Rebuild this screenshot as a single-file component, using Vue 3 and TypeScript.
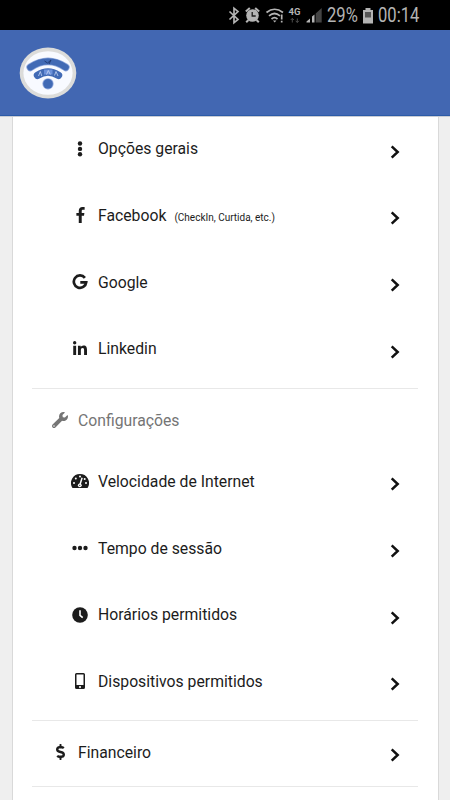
<script setup lang="ts">
interface MenuItem {
  label: string
  icon: string
  note?: string
}

const social: MenuItem[] = [
  { label: 'Opções gerais', icon: 'dots-v' },
  { label: 'Facebook', icon: 'facebook', note: '(CheckIn, Curtida, etc.)' },
  { label: 'Google', icon: 'google' },
  { label: 'Linkedin', icon: 'linkedin' },
]

const settings: MenuItem[] = [
  { label: 'Velocidade de Internet', icon: 'gauge' },
  { label: 'Tempo de sessão', icon: 'dots-h' },
  { label: 'Horários permitidos', icon: 'clock' },
  { label: 'Dispositivos permitidos', icon: 'phone' },
]

const groups: MenuItem[][] = [social, settings]
</script>

<template>
  <div class="screen">
    <div class="status">
      <svg class="status-icons" width="100" height="30" viewBox="226 0 100 30">
        <path d="M229.500 11.500l8.500 8-4 3.300V8.200l4 3.300-8.500 8" fill="none" stroke="#b4b4b4" stroke-width="1.700" />
        <circle cx="252.500" cy="15.500" r="6.300" fill="#b4b4b4" />
        <path d="M245.800 11.500l4-3.500M259.200 11.500l-4-3.500M248.500 20l-2.300 2.300M256.500 20l2.300 2.300" stroke="#b4b4b4" stroke-width="2" />
        <path d="M252.200 12v4h3.500" fill="none" stroke="#1c1c1c" stroke-width="1.300" />
        <g fill="none" stroke="#b4b4b4" stroke-width="1.700">
          <path d="M266.500 12.500q8-6.500 16.500 0" />
          <path d="M269 15.800q5.500-4.600 11 0" />
          <path d="M271.500 19q3-2.600 6 0" />
        </g>
        <path d="M273 20.500h3.400l-1.700 2z" fill="#b4b4b4" />
        <path d="M281.700 14.500v5M281.700 20.700v1.800" stroke="#b4b4b4" stroke-width="1.700" />
        <text x="288.500" y="15.300" class="net">4G</text>
        <path d="M292.300 22.500v-4M290.700 20l1.600-1.700 1.600 1.700M297.300 18.500v4M295.700 20.800l1.600 1.700 1.600-1.700" fill="none" stroke="#4c4c4c" stroke-width="1" />
        <path d="M306.500 22.500v-1l3.500-3v4zM312 22.500v-6l2.500-2v8z" fill="#b4b4b4" />
        <path d="M315.700 22.500V13.500l6-5.500v14.500z" fill="#444" />
      </svg>
      <span class="pct">29%</span>
      <svg class="battery" width="12" height="16" viewBox="0 0 12 16">
        <path d="M3.500 0h5v2H11v13.500H1V2h2.500z" fill="#b4b4b4" />
        <path d="M3 4h6v5.500H3z" fill="#555" />
      </svg>
      <span class="time">00:14</span>
    </div>

    <header class="bar">
      <svg width="58" height="52" viewBox="0 0 58 52">
        <ellipse cx="29" cy="26" rx="28.300" ry="25.400" fill="#dcdcda" />
        <ellipse cx="29" cy="26" rx="24.600" ry="21.800" fill="#f8faff" />
        <path d="M11.300 20.300Q29 8.500 46.700 20.300" fill="none" stroke="#8fa8dc" stroke-width="7.800" stroke-linecap="round" />
        <path d="M11.300 20.300Q29 8.500 46.700 20.300" fill="none" stroke="#416ab5" stroke-width="6.200" stroke-linecap="round" />
        <path d="M18.500 28.300Q29 21.500 39.500 28.300" fill="none" stroke="#416ab5" stroke-width="7.400" stroke-linecap="round" />
        <path d="M25 22.500h8.500v5H25z" fill="#6c91da" />
        <path d="M27.500 27.500l1.800-4 2 4M19.500 29l1.800-4.500 1.500 4.500M35.500 28.500l1.500-4 2 4.500" fill="none" stroke="#c5d4f4" stroke-width=".8" />
        <path d="M25.500 14l3 2 3.500-3-2 4" fill="none" stroke="#203c76" stroke-width="1" />
        <circle cx="29" cy="36.800" r="5.600" fill="#8fa8dc" />
        <circle cx="29" cy="36.800" r="4.800" fill="#416ab5" />
      </svg>
    </header>

    <main class="page">
      <section class="card">
        <template v-for="(items, g) in groups" :key="g">
          <h2 v-if="g === 1" class="heading">
            <svg width="16" height="16" viewBox="0 0 512 512" fill="currentColor">
              <path d="M507.730 109.100c-2.240-9.030-13.540-12.090-20.120-5.510l-74.360 74.360-67.880-11.310-11.310-67.880 74.360-74.360c6.620-6.620 3.430-17.900-5.660-20.160-47.380-11.740-99.550.91-136.580 37.930-39.640 39.640-50.550 97.100-34.050 147.200L18.740 402.760c-24.990 24.990-24.990 65.510 0 90.500 24.990 24.990 65.510 24.990 90.500 0l213.210-213.210c50.120 16.710 107.470 5.680 147.370-34.220 37.070-37.070 49.700-89.320 37.910-136.730zM64 472c-13.250 0-24-10.750-24-24 0-13.260 10.750-24 24-24s24 10.740 24 24c0 13.250-10.750 24-24 24z" />
            </svg>
            <span>Configurações</span>
          </h2>
          <ul class="group">
            <li v-for="item in items" :key="item.label" class="row">
              <span class="icon">
                <svg v-if="item.icon === 'dots-v'" width="18" height="16" viewBox="0 0 18 16" fill="currentColor">
                  <circle cx="9" cy="2.500" r="2.200" /><circle cx="9" cy="7.900" r="2.200" /><circle cx="9" cy="13.300" r="2.200" />
                </svg>
                <svg v-else-if="item.icon === 'facebook'" width="9" height="16" viewBox="0 0 264 512" fill="currentColor">
                  <path d="M215.800 85H264V3.600C255.700 2.500 227.100 0 193.800 0 124.300 0 76.700 42.400 76.700 120.300V192H0v91h76.700v229h94V283h73.600l11.700-91h-85.300v-62.700c0-26.300 7.300-44.300 45.100-44.300z" />
                </svg>
                <svg v-else-if="item.icon === 'google'" width="16" height="16" viewBox="0 0 16 16">
                  <path d="M12.900 3.800A6.200 6.200 0 1 0 14.200 8.300H8.300" fill="none" stroke="currentColor" stroke-width="2.700" />
                </svg>
                <svg v-else-if="item.icon === 'linkedin'" width="14" height="16" viewBox="0 0 448 512" fill="currentColor">
                  <path d="M100.280 448H7.400V148.900h92.880zM53.790 108.100C24.090 108.100 0 83.500 0 53.800a53.790 53.790 0 0 1 107.580 0c0 29.700-24.100 54.300-53.790 54.300zM447.900 448h-92.680V302.400c0-34.700-.7-79.200-48.290-79.200-48.290 0-55.690 37.700-55.690 76.700V448h-92.780V148.900h89.080v40.800h1.300c12.400-23.500 42.690-48.300 87.880-48.300 94 0 111.280 61.900 111.280 142.300V448z" />
                </svg>
                <svg v-else-if="item.icon === 'gauge'" width="18" height="14" viewBox="0 0 18 14">
                  <path d="M9 0a9 9 0 0 0-7.800 13.500q.3.500.8.500h14q.5 0 .8-.5A9 9 0 0 0 9 0z" fill="currentColor" />
                  <g fill="#fff">
                    <circle cx="3" cy="9" r="1" /><circle cx="4.800" cy="4.500" r="1" /><circle cx="9" cy="2.500" r="1" />
                    <circle cx="15" cy="9" r="1" /><circle cx="13.700" cy="5" r="1" /><circle cx="8.800" cy="11.300" r="1.900" />
                  </g>
                  <path d="M8.800 11.300l2.300-7.500" stroke="#fff" stroke-width="1.500" />
                  <circle cx="8.800" cy="11.300" r=".6" fill="currentColor" />
                </svg>
                <svg v-else-if="item.icon === 'dots-h'" width="16" height="16" viewBox="0 0 16 16" fill="currentColor">
                  <circle cx="2.500" cy="8" r="2.200" /><circle cx="8" cy="8" r="2.200" /><circle cx="13.500" cy="8" r="2.200" />
                </svg>
                <svg v-else-if="item.icon === 'clock'" width="16" height="16" viewBox="0 0 16 16">
                  <circle cx="8" cy="8" r="7.800" fill="currentColor" />
                  <path d="M8 3.300v5l2.700 2.300" fill="none" stroke="#fff" stroke-width="1.600" />
                </svg>
                <svg v-else width="10" height="16" viewBox="0 0 10 16">
                  <path d="M1.500 0h7Q10 0 10 1.500v13Q10 16 8.500 16h-7Q0 16 0 14.500v-13Q0 0 1.500 0zM1.500 1.500V12h7V1.500zM5 13a1 1 0 1 0 .01 0z" fill="currentColor" fill-rule="evenodd" />
                </svg>
              </span>
              <span class="label">{{ item.label }}</span>
              <small v-if="item.note" class="note">{{ item.note }}</small>
              <svg class="chevron" width="10" height="14" viewBox="0 0 10 14">
                <path d="M1.700 1.300L7.700 7L1.700 12.700" />
              </svg>
            </li>
          </ul>
        </template>
        <div class="row finance">
          <span class="icon">
            <svg width="9" height="16" viewBox="0 0 288 512" fill="currentColor">
              <path d="M209.200 233.400l-108-31.600C88.700 198.200 80 186.500 80 173.500c0-16.300 13.200-29.500 29.500-29.500h66.300c12.200 0 24.200 3.700 34.200 10.500 6.100 4.100 14.300 3.100 19.500-2l34.800-34c7.100-6.900 6.100-18.400-1.800-24.500C238 74.800 207.400 64.100 176 64V16c0-8.800-7.200-16-16-16h-32c-8.800 0-16 7.200-16 16v48h-2.500C45.800 64-5.400 118.700.5 183.600c4.200 46.100 39.400 83.600 83.800 96.600l102.500 30c12.500 3.700 21.200 15.300 21.200 28.300 0 16.300-13.200 29.500-29.500 29.500h-66.300C100 368 88 364.300 78 357.500c-6.100-4.100-14.300-3.100-19.500 2l-34.800 34c-7.100 6.900-6.100 18.400 1.800 24.500 24.500 19.200 55.100 29.900 86.500 30v48c0 8.800 7.200 16 16 16h32c8.800 0 16-7.200 16-16v-48.200c46.600-.9 90.300-28.600 105.700-72.700 21.500-61.600-14.600-124.800-72.500-141.700z" />
            </svg>
          </span>
          <span class="label">Financeiro</span>
          <svg class="chevron" width="10" height="14" viewBox="0 0 10 14">
            <path d="M1.700 1.300L7.700 7L1.700 12.700" />
          </svg>
        </div>
      </section>
    </main>
  </div>
</template>

<style>
body {
  margin: 0;
  overflow: hidden;
}
</style>

<style scoped>
.screen {
  box-sizing: border-box;
  width: 450px;
  height: 800px;
  display: flex;
  flex-direction: column;
  overflow: hidden;
  background: #efefef;
  color: #1c1c1c;
  font-family: Roboto, "Liberation Sans", sans-serif;
}
.status {
  flex: none;
  display: flex;
  align-items: center;
  height: 30px;
  padding-left: 226px;
  background: #000;
  color: #b4b4b4;
  font-size: 19.500px;
  line-height: 30px;
  white-space: nowrap;
}
.status-icons {
  flex: none;
}
.net {
  font-size: 9.500px;
  font-weight: 700;
  fill: #b4b4b4;
}
.pct,
.time {
  flex: none;
  padding-top: 2px;
  transform: scaleX(0.85);
  transform-origin: left;
}
.pct {
  width: 35px;
  margin-left: 1px;
}
.battery {
  flex: none;
  margin: 1px 4px 0 0;
}
.bar {
  box-sizing: border-box;
  flex: none;
  height: 86px;
  padding: 17px 0 0 19px;
  background: #4267b2;
  border-bottom: 1px solid #2c5ba7;
}
.page {
  flex: 1;
  min-height: 0;
  padding: 0 12px;
  border-top: 1px solid #c9ccd4;
}
.card {
  box-sizing: border-box;
  width: 427px;
  height: 100%;
  padding: 1.300px 20px 0 19px;
  background: #fff;
  border: solid #d9d9d9;
  border-width: 0 1px;
}
.group {
  margin: 0;
  padding: 0 0 2.800px;
  list-style: none;
  border-bottom: 1px solid #e8e8e8;
}
.heading + .group {
  padding-bottom: 2px;
}
.row {
  box-sizing: border-box;
  display: flex;
  align-items: center;
  height: 66.700px;
  padding: 0 18px 0 38px;
}
.icon {
  flex: none;
  display: flex;
  align-items: center;
  justify-content: center;
  width: 20px;
  height: 16px;
  margin: 0 8px 6px 0;
}
.label {
  margin-bottom: 4.500px;
  font-size: 15.750px;
  line-height: 20px;
  white-space: nowrap;
}
.note {
  margin: 0 0 1px 8px;
  font-size: 10px;
  line-height: 12px;
  white-space: nowrap;
}
.chevron {
  flex: none;
  margin-left: auto;
}
.chevron path {
  fill: none;
  stroke: #111;
  stroke-width: 2.500;
}
.heading {
  box-sizing: border-box;
  display: flex;
  align-items: center;
  gap: 10px;
  height: 62px;
  margin: 0;
  padding: 1px 0 0 20px;
  color: #757575;
  font-size: 15.750px;
  font-weight: 400;
}
.finance {
  height: 66px;
  padding-top: 4.500px;
  padding-left: 18px;
  border-bottom: 1px solid #e8e8e8;
}
</style>
